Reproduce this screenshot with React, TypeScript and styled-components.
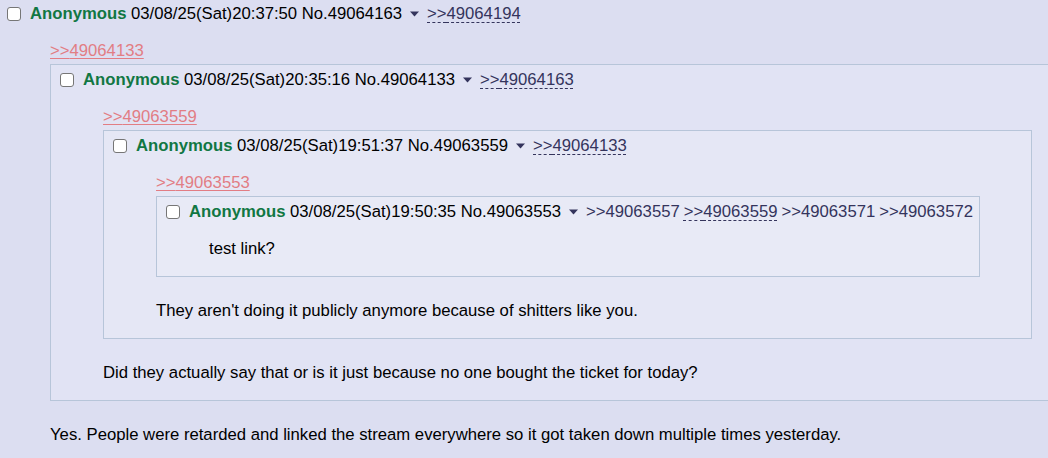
import React from 'react'
import styled, { createGlobalStyle } from 'styled-components'

type PostData = {
  no: string
  date: string
  backlinks: { id: string; inlined?: boolean }[]
  quote?: string
  child?: PostData
  text: string
}

const thread: PostData = {
  no: '49064163',
  date: '03/08/25(Sat)20:37:50',
  backlinks: [{ id: '49064194', inlined: true }],
  quote: '49064133',
  text: 'Yes. People were retarded and linked the stream everywhere so it got taken down multiple times yesterday.',
  child: {
    no: '49064133',
    date: '03/08/25(Sat)20:35:16',
    backlinks: [{ id: '49064163', inlined: true }],
    quote: '49063559',
    text: 'Did they actually say that or is it just because no one bought the ticket for today?',
    child: {
      no: '49063559',
      date: '03/08/25(Sat)19:51:37',
      backlinks: [{ id: '49064133', inlined: true }],
      quote: '49063553',
      text: "They aren't doing it publicly anymore because of shitters like you.",
      child: {
        no: '49063553',
        date: '03/08/25(Sat)19:50:35',
        backlinks: [
          { id: '49063557' },
          { id: '49063559', inlined: true },
          { id: '49063571' },
          { id: '49063572' },
        ],
        text: 'test link?',
      },
    },
  },
}

const levelBg = ['#dcdef1', '#e1e3f4', '#e5e7f5', '#e8eaf6']

const GlobalStyle = createGlobalStyle`
  html, body {
    margin: 0;
    padding: 0;
    background: ${levelBg[0]};
    overflow: hidden;
  }
  body {
    font-family: Arial, "Liberation Sans", sans-serif;
    font-size: 16.7px;
    color: #000;
  }
`

const Page = styled.div`
  width: 1136px;
  padding: 4px 10px 0 6px;
  box-sizing: border-box;
`

const InlineBox = styled.div<{ $level: number }>`
  margin-top: 3px;
  padding: 5px 9px 0 8px;
  background: ${({ $level }) => levelBg[$level]};
  border: 1px solid #b7c5d9;
`

const Header = styled.div`
  display: flex;
  align-items: center;
  height: 20px;
  line-height: 20px;
  white-space: nowrap;
`

const Check = styled.input`
  appearance: none;
  box-sizing: border-box;
  width: 14px;
  height: 14px;
  margin: 0 9px 0 1px;
  flex-shrink: 0;
  background: #fff;
  border: 1px solid #767676;
  border-radius: 3px;
`

const Name = styled.span`
  color: #117743;
  font-weight: bold;
`

const Caret = styled.svg`
  margin: 0 8px 0 8px;
  flex-shrink: 0;
`

const Backlink = styled.a<{ $inlined?: boolean }>`
  color: #34345c;
  margin-right: 4px;
  text-decoration: ${({ $inlined }) => ($inlined ? 'underline dashed' : 'none')};
  text-underline-offset: 3px;
  text-decoration-thickness: 1px;
`

const Quote = styled.blockquote<{ $top?: boolean }>`
  margin: 17px 42px ${({ $top }) => ($top ? '0' : '17px')} 44px;
  line-height: 20px;
`

const QuoteLink = styled.a`
  display: block;
  color: #e27d84;
  text-decoration: underline;
  text-underline-offset: 2px;
  width: fit-content;
`

const Body = styled.div<{ $afterBox?: boolean }>`
  margin-top: ${({ $afterBox }) => ($afterBox ? '24px' : '0')};
`

const PostHeader = ({ post }: { post: PostData }) => (
  <Header>
    <Check type="checkbox" />
    <span>
      <Name>Anonymous</Name> {post.date} No.{post.no}
    </span>
    <Caret width="9" height="6" viewBox="0 0 9 6">
      <path d="M0 0.5 H9 L4.5 5.5 Z" fill="#34345c" />
    </Caret>
    {post.backlinks.map((b) => (
      <Backlink key={b.id} $inlined={b.inlined}>
        &gt;&gt;{b.id}
      </Backlink>
    ))}
  </Header>
)

const PostContent = ({ post, level }: { post: PostData; level: number }) => (
  <>
    <PostHeader post={post} />
    <Quote $top={level === 0}>
      {post.quote && <QuoteLink>&gt;&gt;{post.quote}</QuoteLink>}
      {post.child && (
        <InlineBox $level={level + 1}>
          <PostContent post={post.child} level={level + 1} />
        </InlineBox>
      )}
      <Body $afterBox={!!post.child}>{post.text}</Body>
    </Quote>
  </>
)

export default function App() {
  return (
    <>
      <GlobalStyle />
      <Page>
        <PostContent post={thread} level={0} />
      </Page>
    </>
  )
}
